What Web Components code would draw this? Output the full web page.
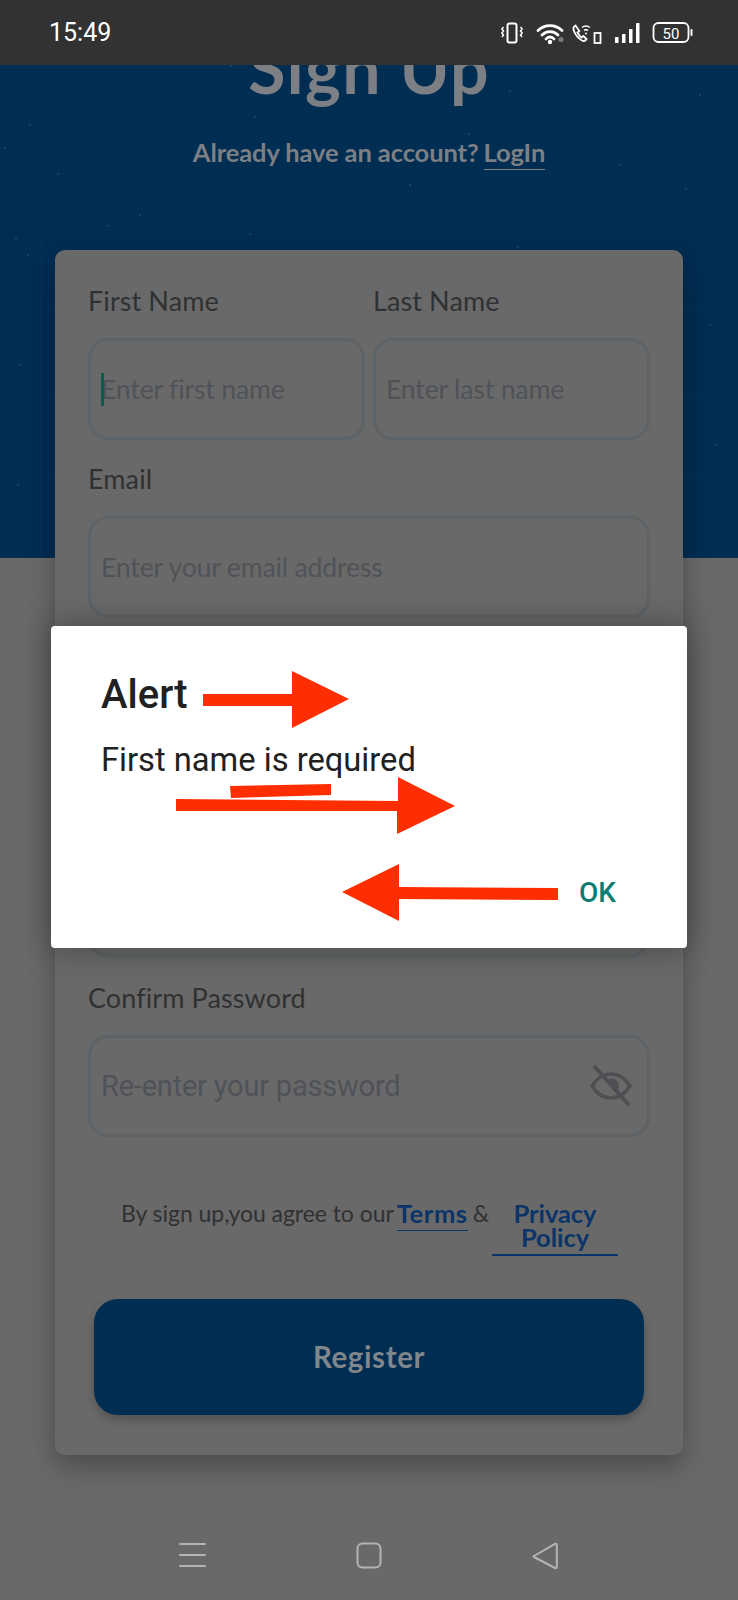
<!DOCTYPE html>
<html><head><meta charset="utf-8"><style>
html,body{margin:0;padding:0;background:#696969}
body{width:738px;height:1600px;overflow:hidden;position:relative;font-family:Lato,"Open Sans",sans-serif}
</style></head><body>
<signup-screen></signup-screen>
<alert-dialog heading="Alert" message="First name is required" action="OK"></alert-dialog>
<script>
function def(name,html){
  customElements.define(name,class extends HTMLElement{
    connectedCallback(){
      if(this.shadowRoot)return;
      const s=this.attachShadow({mode:'open'});
      s.innerHTML=typeof html==='function'?html(this):html;
    }
  });
}
def('status-bar',`<style>
:host{display:flex;align-items:center;justify-content:space-between;height:65px;background:#323232;padding:0 46px 0 49px;box-sizing:border-box;color:#fff;position:relative;z-index:2}
.t{font:400 25px/1 Roboto,sans-serif;margin-top:0}
.i{display:flex;align-items:center}
svg{display:block;overflow:visible}
</style>
<span class="t">15:49</span>
<div class="i">
<svg width="191" height="22" viewBox="0 0 191 22" fill="none" stroke="#fff" stroke-width="2">
 <rect x="6.500" y="1.500" width="9" height="19" rx="2"/>
 <path d="M2.500 5l-1.600 2 1.600 2-1.600 2 1.600 2-1.600 2M19.500 5l1.600 2-1.600 2 1.600 2-1.600 2 1.600 2" stroke-width="1.500"/>
 <path d="M37 8.500a17 17 0 0 1 24 0M41 13a11 11 0 0 1 16 0M45 17a5 5 0 0 1 8 0" stroke-width="2.800" stroke-linecap="round"/>
 <circle cx="49" cy="20" r="2.200" fill="#fff" stroke="none"/>
 <circle cx="60" cy="17.500" r="2.600" fill="#777" stroke="none"/>
 <path d="M74.500 3.500c-2 1-2.500 3-1.500 5.500 1.500 4 4.500 7.500 8 9.500 2 1 3.500.5 4.500-1.500l-3-3-2 1.500c-1.500-1-3-3-4-5l1.800-1.500z" stroke-width="1.800"/>
 <path d="M81 5.500a6.500 6.500 0 0 1 8 0M83 8.500a3 3 0 0 1 4 0" stroke-width="1.500"/>
 <circle cx="85" cy="11.500" r="1" fill="#fff" stroke="none"/>
 <rect x="93.500" y="11" width="6" height="10" stroke-width="1.800"/>
 <g fill="#fff" stroke="none"><rect x="114" y="15" width="3.500" height="6" rx=".5"/><rect x="121" y="12" width="3.500" height="9" rx=".5"/><rect x="128" y="7" width="3.500" height="14" rx=".5"/><rect x="135" y="1" width="3.500" height="20" rx=".5"/></g>
 <rect x="152.500" y="1" width="35" height="19" rx="5" stroke-width="1.800"/>
 <rect x="189.500" y="7" width="2" height="7" rx="1" fill="#fff" stroke="none"/>
 <text x="170" y="16.500" text-anchor="middle" fill="#fff" stroke="none" style="font:400 15px Roboto,sans-serif">50</text>
</svg></div>`);

const dots=[[231,1],[510,26],[255,52],[469,69],[5,83],[58,109],[686,124],[140,150],[108,161],[16,174],[250,169],[518,182],[30,60],[700,30],[620,100],[410,120],[20,300],[710,260],[18,420],[716,380],[28,190]];
def('hero-banner',`<style>
:host{display:block;height:493px;overflow:hidden;text-align:center;color:#7c7f84;position:relative;
background-color:#002d52;
background-image:linear-gradient(90deg,rgba(255,255,255,.016) 1px,transparent 1px),linear-gradient(rgba(255,255,255,.012) 1px,transparent 1px);
background-size:82px 82px;background-position:40px 0,0 0}
h1{margin:0;font:700 68px/80px Lato,sans-serif;margin-top:-37px;letter-spacing:1.200px;position:relative}
p{margin:0;margin-top:29px;font:700 25.500px/30px Lato,sans-serif;display:flex;justify-content:center;gap:5px;letter-spacing:-.1px;position:relative}
a{display:inline-block;border-bottom:1.500px solid #7c7f84;height:33px;box-sizing:border-box}
svg{position:absolute;left:0;top:0}
</style><svg width="738" height="493" fill="#1f4565">${dots.map(d=>`<circle cx="${d[0]}" cy="${d[1]}" r="1.100"/>`).join('')}</svg><h1><slot name="title"></slot></h1><p><span><slot name="sub"></slot></span><a><slot name="link"></slot></a></p>`);

def('form-field',(e)=>{
 const label=e.getAttribute('label');
 const ph=e.getAttribute('placeholder');
 const roboto=e.hasAttribute('roboto');
 const eye=e.hasAttribute('eye');
 const caret=e.hasAttribute('caret');
 return `<style>
:host{display:block;min-width:0}
label{display:block;font:400 27px/30px Lato,sans-serif;color:#2f3133;margin-bottom:22px;letter-spacing:.1px}
.b{height:102px;box-sizing:border-box;border:3.500px solid #5d6367;border-radius:20px;display:flex;align-items:center;padding:0 10px;position:relative}
.p{font:400 ${roboto?'29px':'26.700px'}/32px ${roboto?'Roboto':'Lato'},sans-serif;color:#4f5358;white-space:nowrap;letter-spacing:-.2px}
.c{width:3px;height:33px;background:#0b5a4e;margin-right:-3px;position:relative}
svg{position:absolute;right:14px;top:25px}
</style>${label?`<label>${label}</label>`:''}<div class="b">${caret?'<span class="c"></span>':''}${ph?`<span class="p">${ph}</span>`:''}${eye?`<svg width="44" height="44" viewBox="0 0 44 44" fill="none" stroke="#4d4f52" stroke-width="3.500"><path d="M3 23c5-8 11-12 19-12s14 4 19 12c-5 8-11 12-19 12S8 31 3 23z"/><path d="M5 3l35 39" stroke-width="4"/><path d="M17 18a7 7 0 0 1 11 10z" fill="#4d4f52" stroke="none"/></svg>`:''}</div>`;
});

def('terms-row',`<style>
:host{display:flex;align-items:flex-start;font:400 23px/24px Lato,sans-serif;color:#2f3133;padding-left:33px;letter-spacing:-.05px}
b{font-weight:700;color:#0b3568;font-size:25.500px}
.t{margin-left:3px;border-bottom:1.500px solid #0b3568;height:30px;box-sizing:border-box;letter-spacing:.6px}
.a{margin-left:5px}
.pp{margin-left:auto;margin-right:32px;width:126px;text-align:center;border-bottom:2px solid #0b3568;padding-bottom:5px}
</style><span><slot></slot></span><b class="t"><slot name="terms"></slot></b><span class="a">&amp;</span><b class="pp"><slot name="privacy"></slot></b>`);

def('primary-button',`<style>
:host{display:flex;align-items:center;justify-content:center;height:116px;margin:0 6px;background:#002d52;border-radius:24px;color:#7f868c;font:700 29.500px/1 Lato,sans-serif;letter-spacing:.6px;box-shadow:0 5px 8px rgba(0,0,0,.22)}
</style><slot></slot>`);

def('form-card',`<style>
:host{display:block;box-sizing:border-box;margin:-308px 55px 0;padding:36px 33px 40px;width:628px;background:#696969;border-radius:10px;box-shadow:0 12px 26px rgba(0,0,0,.28);position:relative}
</style><slot></slot>`);

def('nav-bar',`<style>
:host{display:block;height:32px;position:absolute;left:0;right:0;top:1540px}
svg{display:block}
</style><svg width="738" height="32" viewBox="0 0 738 32" fill="none" stroke="#b4b4b4" stroke-width="2">
<path d="M180 4h25M180 15h25M180 26h25" stroke-linecap="round"/>
<rect x="357.500" y="3.500" width="23" height="24" rx="5"/>
<path d="M534 16L555 3.800c1-.5 1.800 0 1.800 1.200v21.800c0 1.200-.8 1.700-1.800 1.200L534 17c-.8-.4-.8-.6 0-1z" stroke-linejoin="round"/>
</svg>`);

def('signup-screen',`<style>
:host{display:block;height:1600px;background:#696969;position:relative}
.two{display:grid;grid-template-columns:277px 277px;gap:8px;margin-bottom:24px}
form-field{margin-bottom:24px}
.two form-field{margin-bottom:0}
.tr{margin-top:64px;margin-bottom:43px}
</style>
<status-bar></status-bar>
<hero-banner><span slot="title">Sign Up</span><span slot="sub">Already have an account?</span><span slot="link">LogIn</span></hero-banner>
<form-card>
<div class="two"><form-field label="First Name" placeholder="Enter first name" caret></form-field><form-field label="Last Name" placeholder="Enter last name"></form-field></div>
<form-field label="Email" placeholder="Enter your email address"></form-field>
<form-field style="margin-top:237px;margin-bottom:26px"></form-field>
<form-field style="margin-bottom:0" label="Confirm Password" placeholder="Re-enter your password" roboto eye></form-field>
<terms-row class="tr">By sign up,you agree to our<span slot="terms">Terms</span><span slot="privacy">Privacy Policy</span></terms-row>
<primary-button>Register</primary-button>
</form-card>
<nav-bar></nav-bar>`);

def('alert-dialog',(e)=>`<style>
:host{display:block;position:absolute;left:51px;top:626px;width:636px;height:322px;background:#fff;border-radius:4px;box-shadow:0 0 34px rgba(0,0,0,.34);box-sizing:border-box;padding:46px 50px 0;color:#212121;font-family:Roboto,sans-serif}
h2{margin:0;font:500 40px/46px Roboto,sans-serif}
p{margin:22px 0 0;font:400 32.700px/40px Roboto,sans-serif}
button{all:unset;position:absolute;left:528px;top:250px;font:500 28px/34px Roboto,sans-serif;color:#0b7d70}
svg{position:absolute;left:0;top:0}
</style><h2>${e.getAttribute('heading')}</h2><p>${e.getAttribute('message')}</p><button>${e.getAttribute('action')}</button>
<svg width="636" height="322" viewBox="51 626 636 322" fill="#ff2e00">
<path d="M203 694H292V671L349 699L292 728V706H203z"/>
<path d="M176 799L398 801V777L455 806L397 834V811L176 811z"/>
<path d="M230 786L331 784V795L231 798z"/>
<path d="M342 892L399 864V887L558 888V900L399 899V921z"/>
</svg>`);
</script>
</body></html>
